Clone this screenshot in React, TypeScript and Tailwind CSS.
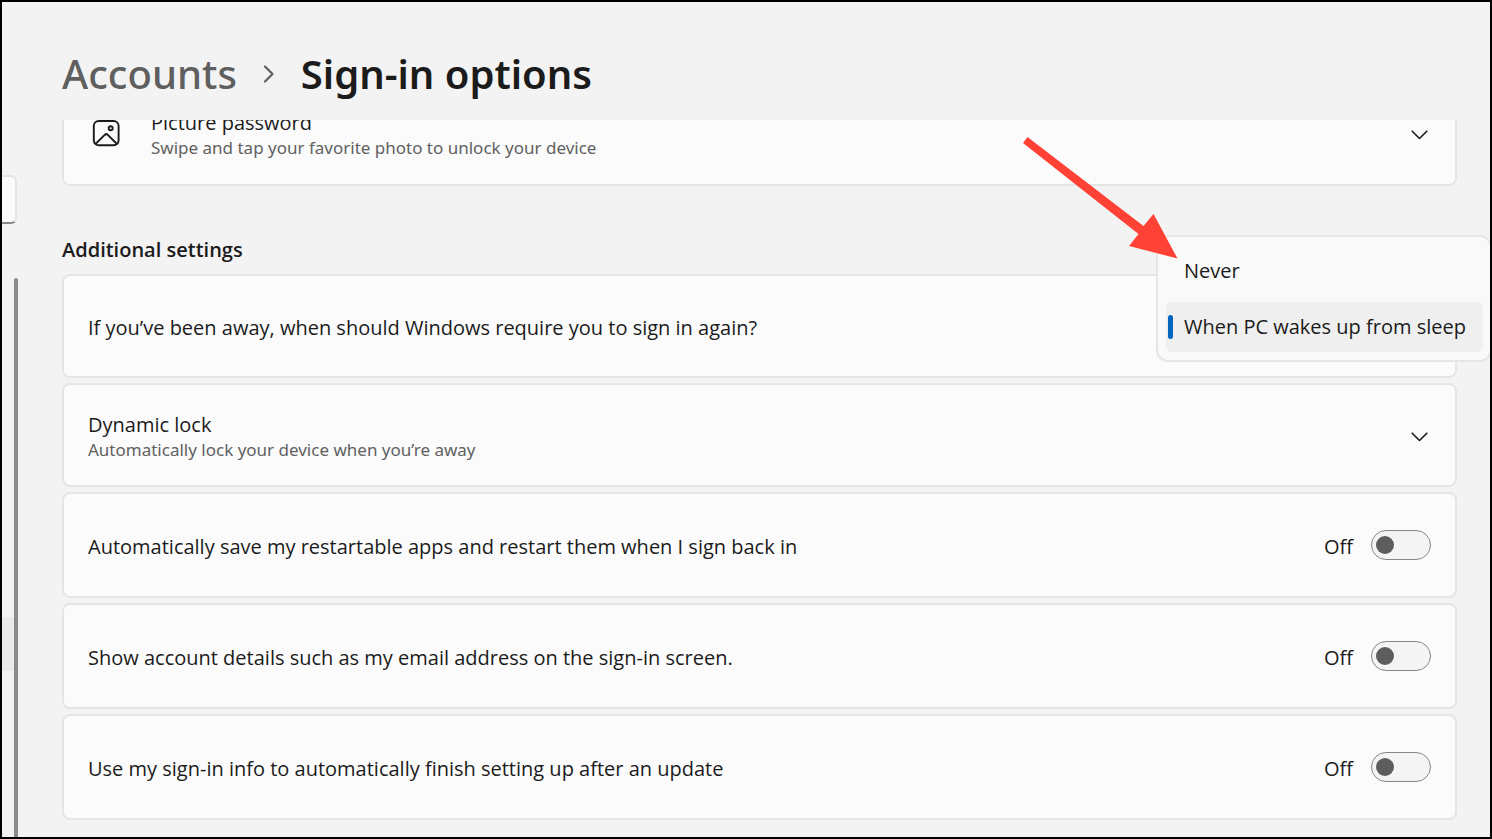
import { useId, useState } from "react";
import type { ReactNode } from "react";
import clsx from "clsx";

const SIGN_IN_CHOICES = ["Never", "When PC wakes up from sleep"];

const TOGGLES = [
  "Automatically save my restartable apps and restart them when I sign back in",
  "Show account details such as my email address on the sign-in screen.",
  "Use my sign-in info to automatically finish setting up after an update",
];

function ChevronDown() {
  return (
    <svg viewBox="0 0 18 18" className="size-[18px] shrink-0" fill="none" aria-hidden="true">
      <path
        d="M1.200 5.200 8.500 12.500l7.300-7.300"
        stroke="currentColor"
        strokeWidth="1.600"
        strokeLinecap="round"
        strokeLinejoin="round"
      />
    </svg>
  );
}

function PictureIcon() {
  return (
    <svg
      viewBox="0 0 28 30"
      className="h-[30px] w-7 shrink-0"
      fill="none"
      stroke="currentColor"
      strokeWidth="1.900"
      aria-hidden="true"
    >
      <rect x="1.800" y="1" width="24.800" height="24.300" rx="5" />
      <circle cx="18.700" cy="8.300" r="2" />
      <path d="m3.500 24 9.200-9.100a2.200 2.200 0 0 1 3.100 0l9.200 9.100" />
    </svg>
  );
}

/** Red callout pointing at the first entry of the menu. */
function PointerArrow() {
  return (
    <svg
      viewBox="0 0 160 130"
      className="pointer-events-none absolute -top-[104px] -left-[140px] h-[130px] w-[160px]"
      fill="#ff4136"
      aria-hidden="true"
    >
      <path d="M9.500 4 125.500 93 135.500 81 159.500 125.500 111 113 120.500 101 5 10Z" />
    </svg>
  );
}

function Card({ children, className }: { children: ReactNode; className?: string }) {
  return (
    <div
      className={clsx(
        "relative flex items-center justify-between rounded-lg border-2 border-[#e5e5e5] bg-[#fbfbfb] px-6",
        className,
      )}
    >
      {children}
    </div>
  );
}

function ExpanderCard({
  title,
  description,
  icon,
}: {
  title: string;
  description: string;
  icon?: ReactNode;
}) {
  return (
    <Card className={icon ? "min-h-[106px]" : "min-h-[104px]"}>
      <button
        type="button"
        aria-expanded="false"
        className="flex w-full items-center pt-[3px] text-left"
      >
        {icon ? <span className="mr-[31px] ml-1">{icon}</span> : null}
        <span className="flex-1">
          <span className="block text-[20px] leading-[26px]">{title}</span>
          <span className="block font-['Noto_Sans',sans-serif] text-[17px] leading-6 text-[#616161]">
            {description}
          </span>
        </span>
        <span className="mr-0.5">
          <ChevronDown />
        </span>
      </button>
    </Card>
  );
}

function ToggleCard({ label }: { label: string }) {
  const id = useId();
  const [on, setOn] = useState(false);
  return (
    <Card className="min-h-[106px]">
      <label htmlFor={id} className="pt-[3px] text-[20px] leading-7">
        {label}
      </label>
      <div className="flex items-center gap-[18px]">
        <span className="pt-[3px] text-[20px] leading-7">{on ? "On" : "Off"}</span>
        <input
          id={id}
          type="checkbox"
          role="switch"
          checked={on}
          onChange={(e) => setOn(e.target.checked)}
          className="flex h-[30px] w-[60px] appearance-none items-center rounded-full border border-[#868686] bg-[#f4f4f4] px-1 before:size-[18px] before:rounded-full before:bg-[#5d5d5d] checked:justify-end checked:border-[#0067c0] checked:bg-[#0067c0] checked:before:bg-white"
        />
      </div>
    </Card>
  );
}

function SignInMenu() {
  const [selected, setSelected] = useState(SIGN_IN_CHOICES[1]);
  return (
    <div className="absolute -top-[41px] -right-[37px] z-10 w-[336px] rounded-xl border-2 border-[#e6e6e6] bg-[#f9f9f9] pt-[9px] pr-[7px] pb-2 pl-2">
      <div
        role="listbox"
        aria-label="When should Windows require you to sign in again"
        className="flex flex-col gap-1.5"
      >
        {SIGN_IN_CHOICES.map((choice) => (
          <button
            key={choice}
            type="button"
            role="option"
            aria-selected={choice === selected}
            onClick={() => setSelected(choice)}
            className={clsx(
              "flex h-[50px] items-center gap-[11px] rounded-md pl-0.5 text-left text-[20px] whitespace-nowrap",
              choice === selected && "bg-[#efefef]",
            )}
          >
            <span
              className={clsx("h-6 w-[5px] rounded-full", choice === selected && "bg-[#0067c0]")}
            />
            {choice}
          </button>
        ))}
      </div>
      <PointerArrow />
    </div>
  );
}

/** The visible sliver of the navigation pane: search box edge, nav item and scrollbar. */
function NavEdge() {
  return (
    <aside className="flex w-4 shrink-0 flex-col">
      <div className="mt-[173px] mr-px h-[49px] rounded-r-md border-2 border-l-0 border-[#e5e5e5] border-b-[#868686] bg-[#fbfbfb]" />
      <div className="mt-[54px] flex flex-1">
        <div className="flex-1">
          <div className="mt-[339px] h-[54px] bg-[#eaeaea]" />
        </div>
        <div className="w-1 rounded-t-full bg-[#8b8b8b]" />
      </div>
    </aside>
  );
}

export default function App() {
  return (
    <div className="flex h-screen overflow-hidden border-2 border-black bg-[#f3f3f3] font-['Open_Sans','Noto_Sans',sans-serif] text-[#1b1b1b]">
      <NavEdge />
      <main className="flex min-w-0 flex-1 flex-col">
        <header className="flex h-[118px] shrink-0 items-center pt-[26px] pl-11">
          <nav
            aria-label="Breadcrumb"
            className="flex items-center font-['Noto_Sans',sans-serif] text-[40px] leading-[54px]"
          >
            <a href="#accounts" className="font-medium text-[#5f5f5f]">
              Accounts
            </a>
            <svg viewBox="0 0 12 18" className="mx-[26px] h-[18px] w-3" fill="none" aria-hidden="true">
              <path
                d="m2 1.500 7.500 7.500L2 16.500"
                stroke="#5f5f5f"
                strokeWidth="2.200"
                strokeLinecap="round"
                strokeLinejoin="round"
              />
            </svg>
            <h1 className="font-semibold">Sign-in options</h1>
          </nav>
        </header>

        <div className="min-h-0 flex-1 overflow-hidden pr-[33px] pl-11">
          <div className="-mt-10">
            <ExpanderCard
              title="Picture password"
              description="Swipe and tap your favorite photo to unlock your device"
              icon={<PictureIcon />}
            />
          </div>

          <h2 className="mt-[50px] mb-[10px] text-[20px] leading-7 font-semibold">
            Additional settings
          </h2>

          <div className="flex flex-col gap-[5px]">
            <Card className="min-h-[104px]">
              <p className="pt-[3px] text-[20px] leading-7">
                If you’ve been away, when should Windows require you to sign in again?
              </p>
              <SignInMenu />
            </Card>
            <ExpanderCard
              title="Dynamic lock"
              description="Automatically lock your device when you’re away"
            />
            {TOGGLES.map((label) => (
              <ToggleCard key={label} label={label} />
            ))}
          </div>
        </div>
      </main>
    </div>
  );
}
